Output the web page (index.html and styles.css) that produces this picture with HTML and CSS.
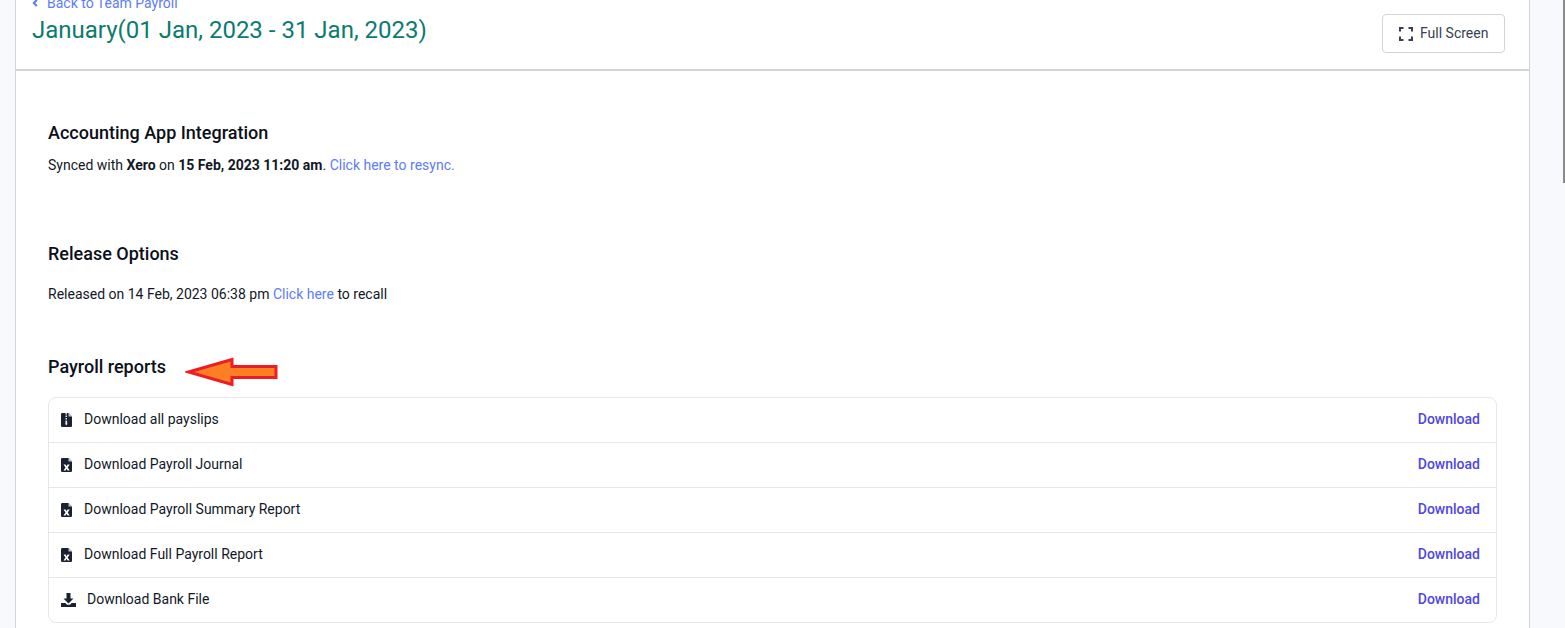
FILE: index.html
```html
<!DOCTYPE html>
<html lang="en">
<head>
    <meta charset="UTF-8">
    <title>January Payroll</title>
    <link rel="stylesheet" href="styles.css">
</head>
<body>
    <div class="scrollbar-thumb"></div>
    <div class="card">
        <header class="card-header">
            <div class="title-block">
                <a class="back-link" href="#">
                    <svg class="back-icon" viewBox="0 0 6 8" width="6" height="8"><path d="M4.800 1 1.800 4l3 3" fill="none" stroke="currentColor" stroke-width="2"/></svg>
                    Back to Team Payroll
                </a>
                <h1>January(01 Jan, 2023 - 31 Jan, 2023)</h1>
            </div>
            <button class="full-screen">
                <svg class="expand-icon" viewBox="0 0 14 14" width="14" height="14"><path d="M1 4.500V1h3.500M9.500 1H13v3.500M13 9.500V13H9.500M4.500 13H1V9.500" fill="none" stroke="currentColor" stroke-width="2"/></svg>
                Full Screen
            </button>
        </header>

        <div class="card-body">
            <section class="integration">
                <h2>Accounting App Integration</h2>
                <p>Synced with <b>Xero</b> on <b>15 Feb, 2023 11:20 am</b>. <a href="#">Click here to resync.</a></p>
            </section>

            <section class="release">
                <h2>Release Options</h2>
                <p>Released on 14 Feb, 2023 06:38 pm <a href="#">Click here</a> to recall</p>
            </section>

            <section class="reports">
                <h2>Payroll reports</h2>
                <svg class="arrow" viewBox="0 0 93 30" width="93" height="30"><path d="M3.500 15 47 2.500V9.500H91V20.500H47V27.500Z" fill="#fd7f23" stroke="#ee1c25" stroke-width="3"/></svg>
                <ul class="report-list">
                    <li>
                        <span class="report-name">
                            <svg class="file-icon" viewBox="0 0 11 14" width="11" height="14"><path d="M0 1.200Q0 0 1.200 0H7.500L11 3.500v9.300Q11 14 9.800 14H1.200Q0 14 0 12.800Z" fill="#1b2130"/><path d="M7.500 0v3.500H11z" fill="#c4c7cd"/><path d="M4.500 0H6v1.500H4.500zM4.500 2.500H6V4H4.500zM4.500 5H6v1.500H4.500zM4.500 7.500H6l.3 3.500-1 1.500-1-1.500z" fill="#e8e9ec"/></svg>
                            Download all payslips
                        </span>
                        <a class="download" href="#">Download</a>
                    </li>
                    <li>
                        <span class="report-name">
                            <svg class="file-icon" viewBox="0 0 11 14" width="11" height="14"><path d="M0 1.200Q0 0 1.200 0H7.500L11 3.500v9.300Q11 14 9.800 14H1.200Q0 14 0 12.800Z" fill="#1b2130"/><path d="M7.500 0v3.500H11z" fill="#c4c7cd"/><path d="M2.500 6.500h2.100l1 1.700 1-1.700h2.100L6.700 9.500l2 3H6.600l-1-1.700-1 1.700H2.500l2-3z" fill="#fff"/></svg>
                            Download Payroll Journal
                        </span>
                        <a class="download" href="#">Download</a>
                    </li>
                    <li>
                        <span class="report-name">
                            <svg class="file-icon" viewBox="0 0 11 14" width="11" height="14"><path d="M0 1.200Q0 0 1.200 0H7.500L11 3.500v9.300Q11 14 9.800 14H1.200Q0 14 0 12.800Z" fill="#1b2130"/><path d="M7.500 0v3.500H11z" fill="#c4c7cd"/><path d="M2.500 6.500h2.100l1 1.700 1-1.700h2.100L6.700 9.500l2 3H6.600l-1-1.700-1 1.700H2.500l2-3z" fill="#fff"/></svg>
                            Download Payroll Summary Report
                        </span>
                        <a class="download" href="#">Download</a>
                    </li>
                    <li>
                        <span class="report-name">
                            <svg class="file-icon" viewBox="0 0 11 14" width="11" height="14"><path d="M0 1.200Q0 0 1.200 0H7.500L11 3.500v9.300Q11 14 9.800 14H1.200Q0 14 0 12.800Z" fill="#1b2130"/><path d="M7.500 0v3.500H11z" fill="#c4c7cd"/><path d="M2.500 6.500h2.100l1 1.700 1-1.700h2.100L6.700 9.500l2 3H6.600l-1-1.700-1 1.700H2.500l2-3z" fill="#fff"/></svg>
                            Download Full Payroll Report
                        </span>
                        <a class="download" href="#">Download</a>
                    </li>
                    <li>
                        <span class="report-name bank">
                            <svg class="file-icon" viewBox="0 0 15 14" width="15" height="14"><path d="M5.500 0h4v5.500h3L7.500 10.500 2.500 5.500h3z" fill="#1b2130"/><path d="M0 10h4.500l1.500 1.700h3L10.500 10H15v4H0z" fill="#1b2130"/></svg>
                            Download Bank File
                        </span>
                        <a class="download" href="#">Download</a>
                    </li>
                </ul>
            </section>
        </div>
    </div>
</body>
</html>
```

FILE: styles.css
```css
:root {
    --teal: #0b7b6f;
    --link: #5c7cfa;
    --indigo: #4f46e5;
    --border: #e5e7eb;
    --rule: #d1d5db;
    --ink: #111827;
}

* {
    box-sizing: border-box;
    margin: 0;
    padding: 0;
}

html,
body {
    height: 628px;
    overflow: hidden;
}

body {
    font-family: Roboto, sans-serif;
    font-size: 14px;
    color: var(--ink);
    background: #f8f9fc;
    padding: 0 35px 0 15px;
}

.scrollbar-thumb {
    position: absolute;
    top: 0;
    right: 0;
    width: 2px;
    height: 183px;
    background: #8a8a8a;
}

.card {
    width: 1515px;
    height: 800px;
    margin-top: -5px;
    background: #fff;
    border-left: 1px solid var(--rule);
    border-right: 1px solid var(--rule);
}

.card-header {
    display: flex;
    justify-content: space-between;
    align-items: flex-start;
    height: 76px;
    padding: 0 24px 0 16px;
    border-bottom: 2px solid var(--rule);
}

.back-link {
    display: flex;
    align-items: center;
    gap: 9px;
    height: 16px;
    line-height: 16px;
    color: var(--link);
    text-decoration: none;
}

.back-icon {
    flex: none;
}

h1 {
    margin-top: 3px;
    font-size: 24px;
    font-weight: 400;
    line-height: 32px;
    color: var(--teal);
}

.full-screen {
    display: flex;
    align-items: center;
    gap: 7px;
    width: 123px;
    height: 39px;
    margin-top: 19px;
    padding: 0 0 2px 16px;
    font-family: inherit;
    font-size: 14px;
    color: #374151;
    background: #fff;
    border: 1px solid var(--rule);
    border-radius: 4px;
}

.expand-icon {
    margin-top: 2px;
}

.card-body {
    padding: 0 32px;
}

h2 {
    font-size: 18px;
    font-weight: 500;
    line-height: 24px;
    color: #0b0f19;
}

p {
    line-height: 20px;
    color: #111827;
}

p a {
    color: var(--link);
    text-decoration: none;
}

.integration {
    padding-top: 50px;
}

.integration p {
    margin-top: 10px;
}

.release {
    padding-top: 67px;
}

.release p {
    margin-top: 18px;
}

.reports {
    position: relative;
    padding-top: 51px;
}

.arrow {
    position: absolute;
    top: 53px;
    left: 137px;
}

.report-list {
    margin-top: 18px;
    list-style: none;
    border: 1px solid var(--border);
    border-radius: 8px;
}

.report-list li {
    display: flex;
    justify-content: space-between;
    align-items: center;
    height: 45px;
    padding: 0 16px 2px 12px;
    border-bottom: 1px solid var(--border);
}

.report-list li:last-child {
    height: 44px;
    padding-bottom: 2px;
    border-bottom: 0;
}

.report-name {
    display: flex;
    align-items: center;
    gap: 12px;
}

.bank {
    gap: 11px;
}

.file-icon {
    flex: none;
    margin-top: 2px;
}

.download {
    font-weight: 500;
    color: var(--indigo);
    text-decoration: none;
}
```
